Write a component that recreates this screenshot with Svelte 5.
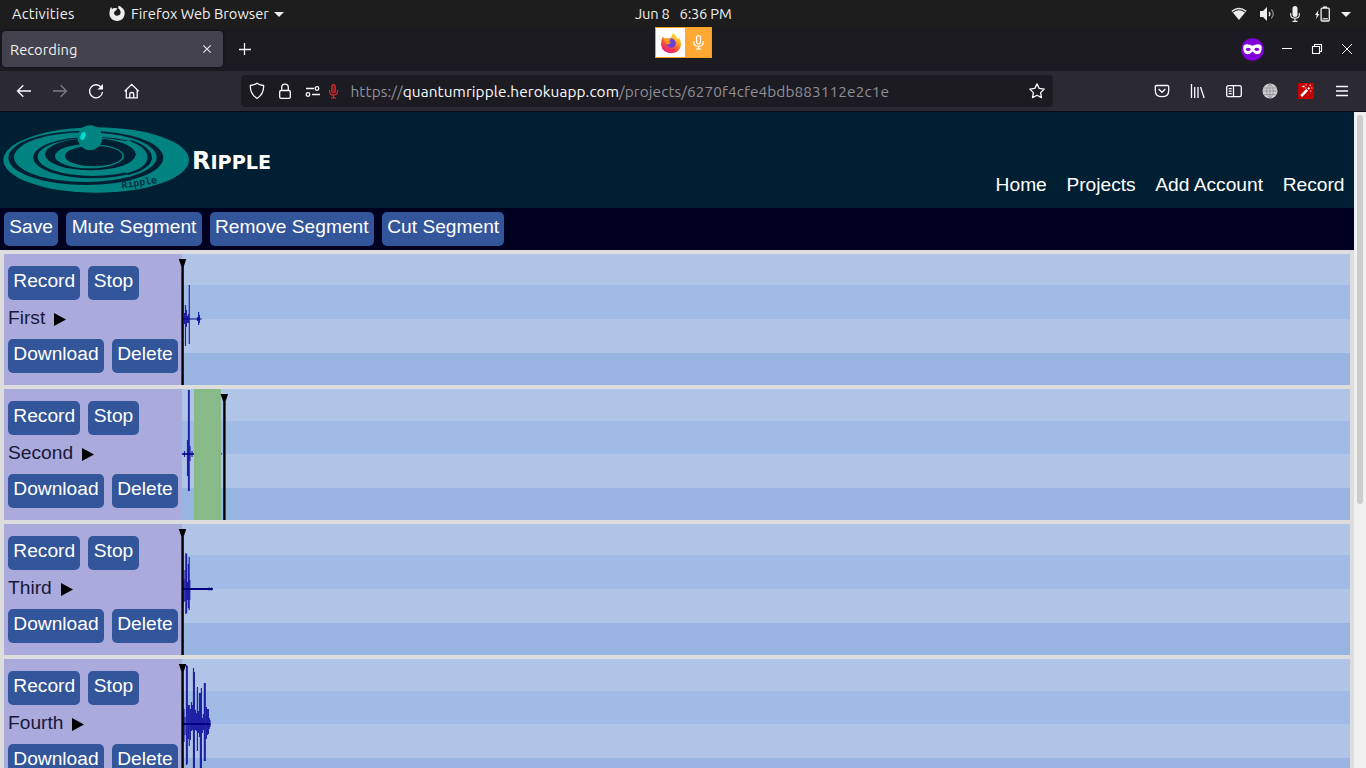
<script>
  const tracks = [
    {
      name: 'First',
      cursor: 0.5,
      line: [1, 19.7, 1],
      bars: [[2.6, 59, 70], [3.5, 51, 92], [4.4, 56, 73], [5.6, 62, 69], [6.4, 60, 69], [7.3, 31, 90], [15.5, 63, 67], [16.6, 58, 71], [17.4, 61, 69]]
    },
    {
      name: 'Second',
      cursor: 42.3,
      line: [0, 12, 1.6],
      region: [12, 27],
      bars: [[2.5, 62, 68], [5.5, 51, 87], [6.5, 1, 102], [7.2, 1, 102], [8, 57, 72], [10, 62, 68], [39.5, 64.4, 65.6]]
    },
    {
      name: 'Third',
      cursor: 0.5,
      line: [1, 30.8, 2],
      bars: [[2, 55, 78], [3, 46, 77], [3.8, 29, 90], [4.6, 30, 89], [5.5, 58, 76], [6.4, 40, 84], [7.2, 33, 86], [7.8, 56, 76], [27, 63.5, 66.5], [29.5, 63.5, 66.5]]
    },
    {
      name: 'Fourth',
      cursor: 0.5,
      line: [1, 28.5, 2],
      bars: [[2, 50, 83], [3, 58, 76], [4.5, 6, 106], [5.3, 7, 105], [6.4, 46, 80], [7.3, 46, 87], [8.4, 50, 81], [9.5, 43, 72], [10.4, 46, 71], [11.5, 9, 109], [12.4, 13, 109], [13.5, 51, 71], [14.4, 54, 72], [15.4, 28, 92], [16.4, 52, 74], [17.5, 34, 78], [18.4, 34, 109], [19.4, 29, 109], [20.4, 59, 74], [21.4, 55, 71], [22.4, 24, 102], [23.3, 24, 102], [24.4, 48, 80], [25.4, 50, 76], [26.4, 50, 75], [27.3, 59, 70], [28, 61, 68]]
    }
  ];
</script>

<div class="screen">
  <div class="topbar">
    <span class="activities">Activities</span>
    <svg class="ffmono" width="16" height="17" viewBox="0 0 16 17"><path d="M2 2 3.2 4Q4.4 2.8 6.2 3L8.4 3.4 7 5.5 5.7 6.2Q4.3 7.7 5.5 9.4 6.8 11.1 9 10.5 12 9.7 11.6 6.7 11.2 4.5 9.2 3.3L9.5.7Q12 1 13 3L14 3.4Q15.8 5.5 15.7 8.4 15.2 13.5 11.4 15.2 7 17 3.4 14.5-.2 11.7.5 7 .8 4.2 2 2Z" fill="#eee"/></svg>
    <span class="appname">Firefox Web Browser</span>
    <i class="caret"></i>
    <span class="clock"><span>Jun 8</span><span>6:36 PM</span></span>
    <div class="status">
      <svg width="16" height="14" viewBox="0 0 16 14"><path d="M.4 3.8Q8-2.3 15.6 3.8L8 13Z" fill="#eee"/><path d="M1.8 5.1Q8 .5 14.2 5.1" fill="none" stroke="#222" stroke-width="1.1"/></svg>
      <svg width="15" height="14" viewBox="0 0 15 14"><path d="M0 4h3l4-4v14L3 10H0Z" fill="#eee"/><path d="M9 5q1.8 2 0 4" fill="none" stroke="#eee" stroke-width="1.3"/><path d="M11.3 2.5q4 4.5 0 9" fill="none" stroke="#888" stroke-width="1.3"/></svg>
      <svg width="10" height="16" viewBox="0 0 10 16"><rect x="2.5" width="5" height="11" rx="2.5" fill="#eee"/><path d="M.7 7v1.5q0 3.8 4.3 3.8t4.3-3.8V7M5 12v3.3M2.5 15.4h5" fill="none" stroke="#eee" stroke-width="1.1"/></svg>
      <svg width="15" height="16" viewBox="0 0 15 16"><path d="M3.5 4 0 9h1.8L1 13l3.5-5H2.8Z" fill="#eee"/><path d="M8 1.2h4" stroke="#eee" stroke-width="1.6"/><rect x="6.1" y="2.2" width="8.2" height="12.8" rx="1" fill="none" stroke="#eee" stroke-width="1.3"/><path d="M7.5 12.8h5.4" stroke="#eee" stroke-width="1.2"/></svg>
      <i class="caret"></i>
    </div>
  </div>

  <div class="tabbar">
    <div class="tab"><span>Recording</span><svg width="8" height="8" viewBox="0 0 8 8"><path d="m.3.3 7.4 7.4m0-7.4L.3 7.7" stroke="#e8e8ec" stroke-width="1.1"/></svg></div>
    <svg class="plus" width="12" height="12" viewBox="0 0 12 12"><path d="M5.5 0v12M0 6.5h12" stroke="#f2f2f5" stroke-width="1.3"/></svg>
    <div class="winbtns">
      <svg width="23" height="23" viewBox="0 0 23 23"><circle cx="11.5" cy="11.5" r="11.3" fill="#8000d7"/><path d="M2.3 8.8Q2.6 6.3 6 6.3q3 0 5.5 1.5Q14 6.3 17 6.3q3.4 0 3.7 2.5 .4 7.4-4.2 7.4-2.8 0-5-2.7-2.2 2.7-5 2.7-4.6 0-4.2-7.4Z" fill="#fff"/><ellipse cx="7.2" cy="11.3" rx="2.5" ry="1.6" fill="#8000d7"/><ellipse cx="15.8" cy="11.3" rx="2.5" ry="1.6" fill="#8000d7"/></svg>
      <svg width="10" height="10" viewBox="0 0 10 10"><path d="M0 4.5h10" stroke="#fff"/></svg>
      <svg width="10" height="10" viewBox="0 0 10 10"><path d="M.5 2.5h7v7h-7ZM2.5 2V.5h7v7H8" fill="none" stroke="#fff" stroke-width="1.1"/></svg>
      <svg width="10" height="10" viewBox="0 0 10 10"><path d="m0 0 10 10M10 0 0 10" stroke="#fff"/></svg>
    </div>
  </div>

  <div class="sharing">
    <div class="fox"><svg width="22" height="22" viewBox="0 0 22 22">
      <defs><linearGradient id="flame" x1=".85" y1="0" x2=".3" y2="1"><stop offset="0" stop-color="#fff04a"/><stop offset=".35" stop-color="#ffac22"/><stop offset=".65" stop-color="#ff5035"/><stop offset="1" stop-color="#e31587"/></linearGradient></defs>
      <path d="M3 4.5 5 7q2-1 4.5-.5Q12 5.5 12.5 1 16 2.5 17 6l1.5 1 .5-1.5q2.5 3.5 2 7.5-1 7.5-9.5 8.2Q2.5 21 1 13 .7 8 3 4.5Z" fill="url(#flame)"/><circle cx="11.2" cy="11.2" r="4.600" fill="#6b3fd6"/><path d="M3 5.5q3 1.2 7.5 2l-1 2Q7 10 7 12q-3-3-4-6.5Z" fill="#ff9a20"/><path d="m6.500 10 4.500.3-1.500 1.700-3 .5Z" fill="#ff9325"/></svg></div>
    <div class="micbox"><svg width="11" height="15" viewBox="0 0 11 15"><rect x="3.5" y=".6" width="4" height="8.4" rx="2" fill="none" stroke="#fff" stroke-width="1.2"/><path d="M.8 6v1.5q0 3.8 4.7 3.8t4.7-3.8V6M5.5 11v3M3 14h5" fill="none" stroke="#fff" stroke-width="1.2"/></svg></div>
  </div>

  <div class="navbar">
    <div class="navleft">
      <svg width="16" height="16" viewBox="0 0 16 16"><path d="M15 8H1.5M7.3 2.2 1.5 8l5.8 5.8" class="ln"/></svg>
      <svg width="16" height="16" viewBox="0 0 16 16" opacity=".4"><path d="M1 8h13.5M8.7 2.2 14.5 8l-5.8 5.8" class="ln"/></svg>
      <svg width="16" height="16" viewBox="0 0 16 16"><path d="M13.2 4.3A6.5 6.5 0 1 0 14.5 9" class="ln"/><path d="M15 1v5.5H9.5Z" fill="#fbfbfe"/></svg>
      <svg width="16" height="16" viewBox="0 0 16 16"><path d="m.7 8.3 7-7 7 7M2.3 7v7.9h10.9V7M5.8 14.9v-4.2q0-1.2 1.95-1.2t1.95 1.2v4.2" class="ln"/></svg>
    </div>
    <div class="url">
      <svg width="16" height="18" viewBox="0 0 16 18"><path d="M8 1.2Q11 3.2 14.6 3.5q.6 8-6.6 13-7.2-5-6.6-13Q5 3.2 8 1.2Z" class="ln"/></svg>
      <svg width="12" height="16" viewBox="0 0 12 16"><rect x=".7" y="7.5" width="10.6" height="7.8" rx="1.4" class="ln"/><path d="M2.7 7.5v-3a3.3 3.3 0 0 1 6.6 0v3" class="ln"/></svg>
      <svg width="16" height="11" viewBox="0 0 16 11"><path d="M1 2.5h8M7 8.5h8" class="ln"/><circle cx="12" cy="2.5" r="1.8" class="ln"/><circle cx="3" cy="8.5" r="1.8" class="ln"/></svg>
      <svg width="9" height="15" viewBox="0 0 9 15"><rect x="2.8" y=".6" width="3.4" height="8.4" rx="1.7" fill="#6d1f25" stroke="#e22d2d" stroke-width="1.1"/><path d="M.6 6v1.5q0 3.6 3.9 3.6t3.9-3.6V6M4.5 11v3M2 14h5" fill="none" stroke="#e22d2d" stroke-width="1.1"/></svg>
      <span class="address"><span>https://</span><b>quantumripple.herokuapp.com</b><span>/projects/6270f4cfe4bdb883112e2c1e</span></span>
      <svg class="star" width="16" height="16" viewBox="0 0 16 16"><path d="m8 .9 2.2 4.5 5 .7-3.6 3.5.9 5L8 12.2l-4.5 2.4.9-5L.8 6.1l5-.7Z" class="ln" stroke-linejoin="round"/></svg>
    </div>
    <div class="navright">
      <svg width="16" height="16" viewBox="0 0 16 16"><path d="M2.5 2.5h11q1.2 0 1.2 1.2v4q0 6-6.7 6t-6.7-6v-4q0-1.2 1.2-1.2Z" class="ln"/><path d="m4.6 6 3.4 3.3L11.4 6" class="ln"/></svg>
      <svg width="16" height="16" viewBox="0 0 16 16"><path d="M1.5 1v14M4.700 4v11M8 4v11M10.500 4l3.700 11" class="ln"/></svg>
      <svg width="16" height="16" viewBox="0 0 16 16"><rect x=".7" y="2.7" width="14.6" height="11" rx="1.7" class="ln"/><path d="M7.5 3v10.5M2.7 5.7h3M2.7 8.2h3M2.7 10.7h3" class="ln"/></svg>
      <svg width="16" height="16" viewBox="0 0 16 16"><circle cx="8" cy="8" r="7.5" fill="#d0d0d0"/><path d="M8 .5v15M1 5h14M.5 8h15M1 11.5h14M8 .5Q1 8 8 15.5M8 .5Q15 8 8 15.5" stroke="#858589" fill="none" stroke-width=".7"/></svg>
      <svg width="16" height="16" viewBox="0 0 16 16"><rect width="16" height="16" rx="1" fill="#c40000"/><path d="m3.2 13 6-6.2" stroke="#fff" stroke-width="2.6"/><path d="m10 6 1.4-1.4" stroke="#fff" stroke-width="2"/><path d="M4 3.5h2M7.5 2h1.2M7 5h1.3M11.5 2.2H13M13 5h1.5M12 8h1.5M6 2.5v2" stroke="#ffd8d8" stroke-width="1.1"/></svg>
      <svg width="16" height="16" viewBox="0 0 16 16"><path d="M2 3.5h12M2 8h12M2 12.5h12" class="ln"/></svg>
    </div>
  </div>

  <div class="viewport">
    <div class="page">
      <header>
        <svg width="190" height="96" viewBox="0 6 570 288">
          <ellipse cx="288.5" cy="150" rx="278.5" ry="98" fill="#008381"/>
          <ellipse cx="257.5" cy="143.5" rx="232.5" ry="81.5" fill="#001f33"/>
          <ellipse cx="256" cy="141.5" rx="214" ry="74.5" fill="#008381"/>
          <ellipse cx="277.5" cy="142.5" rx="178" ry="62.5" fill="#001f33"/>
          <ellipse cx="278" cy="140.5" rx="165" ry="57.5" fill="#008381"/>
          <ellipse cx="271.5" cy="133" rx="136.5" ry="48" fill="#001f33"/>
          <ellipse cx="268.5" cy="138.5" rx="103.5" ry="36.5" fill="#008381"/>
          <ellipse cx="281" cy="138" rx="86" ry="31" fill="#001f33"/>
          <path d="M408 133Q404 160 350 174L380 190Q443 172 443 143Q443 112 390 93L350 92Q404 108 408 133Z" fill="#008381"/>
          <path d="M443 143Q443 172 380 191L386 195Q455 175 455 143Q455 112 396 91L388 92Q443 112 443 143Z" fill="#001f33"/>
          <circle cx="270" cy="83" r="37" fill="#008381"/>
          <ellipse cx="249" cy="78" rx="7.5" ry="12.5" fill="#00d8d3" transform="rotate(17 249 78)"/>
          <text x="366" y="236" transform="rotate(-9 366 236)" class="logotext" textLength="108">Ripple</text>
        </svg>
        <h1>Ripple</h1>
        <nav><a href="#home">Home</a><a href="#projects">Projects</a><a href="#account">Add Account</a><a href="#record">Record</a></nav>
      </header>
      <div class="tools">
        <button>Save</button><button>Mute Segment</button><button>Remove Segment</button><button>Cut Segment</button>
      </div>
      <main>
        {#each tracks as t}
          <section>
            <div class="panel">
              <div class="row"><button>Record</button><button>Stop</button></div>
              <div class="label"><span>{t.name}</span><svg width="12" height="13" viewBox="0 0 12 13"><path d="M0 0 12 6.5 0 13Z"/></svg></div>
              <div class="row"><button>Download</button><button>Delete</button></div>
            </div>
            <div class="lane">
              <svg width="80" height="131" viewBox="0 0 80 131">
                <g stroke="#1414a0" stroke-opacity=".9" stroke-width="1.2">
                  {#each t.bars as [x, a, b]}<path d="M{x} {a}V{b}" />{/each}
                </g>
                <path d="M{t.line[0]} 65H{t.line[1]}" stroke="#000080" stroke-width={t.line[2]} />
                {#if t.region}<rect x={t.region[0]} width={t.region[1]} height="131" fill="#88b988" />{/if}
                <path d="M{t.cursor - 3.7} 5h7.4l-2.4 7.5V131h-2.4V12.5Z" />
              </svg>
            </div>
          </section>
        {/each}
      </main>
    </div>
    <div class="scroll"><i></i></div>
  </div>
</div>

<style>
  :global(body) { margin: 0; overflow: hidden; }
  .screen { width: 1366px; height: 768px; overflow: hidden; position: relative; display: flex; flex-direction: column; font-family: Ubuntu, "Noto Sans", sans-serif; font-size: 14.67px; color: #f0f0f0; background: #1c1b22; }
  svg { display: block; flex: none; overflow: visible; }
  .ln { fill: none; stroke: #fbfbfe; stroke-width: 1.3; }
  .topbar { height: 28px; flex: none; background: #1d1d1d; display: flex; align-items: center; padding: 0 15px 0 12px; box-sizing: border-box; white-space: nowrap; line-height: 28px; }
  .activities { width: 97px; letter-spacing: .25px; }
  .ffmono { margin-bottom: 2px; }
  .appname { width: 143px; margin-left: 6px; letter-spacing: 0; }
  .caret { width: 0; height: 0; border: 5px solid transparent; border-top-color: #eee; border-bottom: 0; }
  .clock { margin-left: 351px; display: flex; gap: 10px; font-size: 14.67px; letter-spacing: -.2px; }
  .status { margin-left: auto; display: flex; align-items: center; gap: 11px; }
  .status svg:nth-child(1) { margin-right: 2px; }
  .status svg:nth-child(3) { margin: 0 4px 0 4px; }
  .tabbar { height: 43px; flex: none; display: flex; align-items: center; box-sizing: border-box; padding: 0 14px 1px 2px; }
  .tab { width: 221px; height: 36px; box-sizing: border-box; padding: 0 12px 0 8px; border-radius: 4px; background: #42414d; display: flex; align-items: center; justify-content: space-between; letter-spacing: .05px; box-shadow: 0 0 3px #0009; }
  .plus { margin-left: 16px; }
  .winbtns { margin-left: auto; display: flex; align-items: center; gap: 20px; }
  .winbtns svg:first-child { margin-right: -2px; }
  .sharing { position: absolute; left: 655px; top: 27px; width: 57px; height: 31px; box-sizing: border-box; border: 1px solid #f6a020; display: flex; }
  .fox { width: 29px; background: #fff; display: grid; place-items: center; }
  .micbox { flex: 1; background: #ffa834; display: grid; place-items: center; }
  .navbar { height: 41px; flex: none; box-sizing: border-box; border-bottom: 1px solid #0c0c0f; background: #2b2a33; display: flex; align-items: center; padding: 0 16px; }
  .navleft, .navright { display: flex; gap: 20px; }
  .navleft { width: 225px; }
  .url { width: 812px; height: 32px; box-sizing: border-box; background: #1c1b22; border-radius: 4px; display: flex; align-items: center; padding: 0 8px; }
  .url svg:nth-child(2) { margin-left: 14px; }
  .url svg:nth-child(3) { margin-left: 14px; }
  .url svg:nth-child(4) { margin-left: 8px; }
  .address { margin-left: 12.5px; white-space: nowrap; color: #8f8f98; font-size: 15.4px; letter-spacing: .08px; }
  .address b { font-weight: 400; color: #fbfbfe; }
  .star { margin-left: auto; }
  .navright { margin-left: auto; }
  .viewport { flex: 1; min-height: 0; display: flex; font-family: Helvetica, "Liberation Sans", Arial, sans-serif; font-size: 19.2px; }
  .page { width: 1354px; height: 656px; overflow: hidden; background: #ddd; }
  header { height: 96px; background: #001f33; display: flex; box-sizing: border-box; padding-right: 9.5px; }
  .logotext { font: bold 30px "DejaVu Sans Mono", monospace; fill: #003044; }
  h1 { margin: 35px 0 0 2px; font: bold 19.2px/28px "DejaVu Sans", sans-serif; text-transform: uppercase; color: #fff; }
  h1::first-letter { font-size: 24px; }
  nav { margin: 62px 0 0 auto; display: flex; gap: 19.6px; line-height: 22px; }
  nav a { color: #fff; text-decoration: none; }
  .tools { height: 42px; box-sizing: border-box; padding: 4px; background: #000020; display: flex; gap: 8px; }
  button { font: inherit; line-height: 22px; height: 34px; border: 0; border-radius: 5px; background: #335599; color: #fff; padding: 4px 5.3px 8px; white-space: nowrap; }
  main { padding: 4px; display: flex; flex-direction: column; gap: 4px; }
  section { height: 131px; display: flex; flex: none; }
  .panel { width: 178px; box-sizing: border-box; padding: 12px 4px; background: #aaaadd; }
  .row { display: flex; gap: 8px; }
  .label { height: 39px; box-sizing: border-box; padding-top: 1px; line-height: 34px; display: flex; gap: 9px; color: #181838; align-items: flex-start; }
  .label svg { margin-top: 12px; }
  .lane { flex: 1; background: linear-gradient(#b0c4e8 0 31.5px, #a0bbe5 31.5px 65px, #b0c4e8 65px 99px, #98b4e1 99px); }
  .scroll { width: 12px; background: #f0f0f0; padding: 3px 3px 0; box-sizing: border-box; }
  .scroll i { display: block; height: 389px; border-radius: 3px; background: #cdcdcd; }
</style>
